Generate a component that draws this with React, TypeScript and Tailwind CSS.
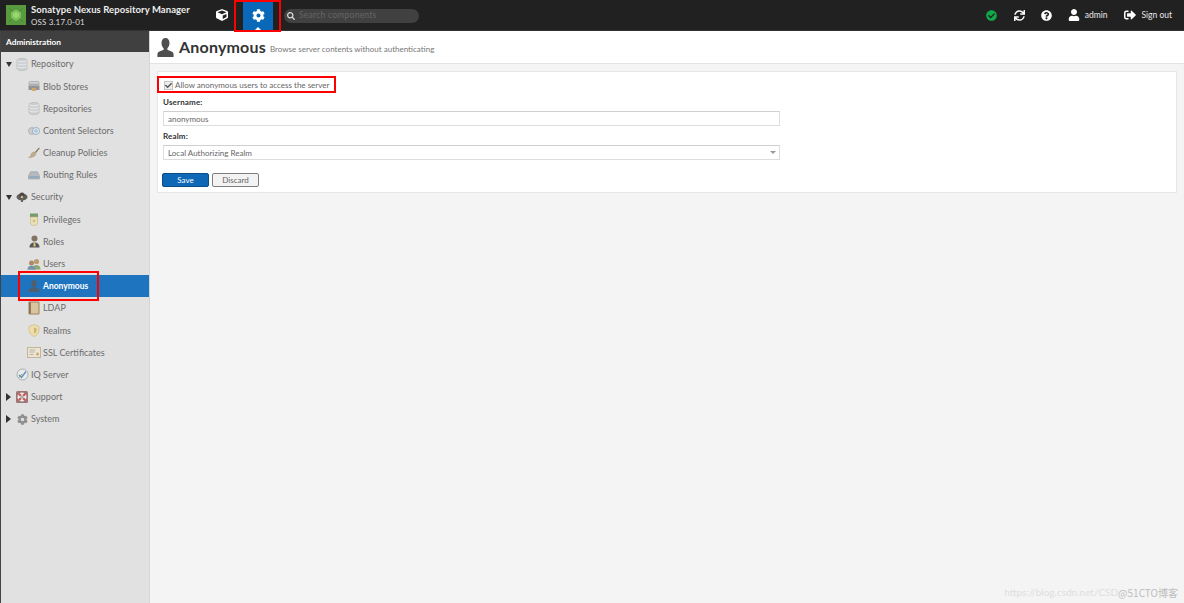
import React from "react";
import { FaCube, FaCog, FaSearch, FaCheckCircle, FaSync, FaQuestionCircle, FaUser, FaSignOutAlt, FaCheck } from "react-icons/fa";

const Db = ({ c = "#c9cdd0" }: { c?: string }) => (
  <svg width="12" height="13" viewBox="0 0 12 13">
    <path d="M1 2.500C1 1.200 3.200.6 6 .6s5 .6 5 1.900v8c0 1.300-2.200 2-5 2s-5-.7-5-2z" fill={c} stroke="#a9adb0" strokeWidth=".7" />
    <path d="M1 5.500c1 1 2.800 1.300 5 1.300s4-.3 5-1.300M1 8.500c1 1 2.800 1.300 5 1.300s4-.3 5-1.300M1 2.500c1 1 2.800 1.300 5 1.300s4-.3 5-1.300" fill="none" stroke="#f1f1f1" strokeWidth=".8" />
  </svg>
);
const Blob = () => (
  <svg width="12" height="12" viewBox="0 0 12 12">
    <rect x=".5" y="1" width="11" height="6" rx="2" fill="#a3a6a8" />
    <rect x=".5" y="6" width="11" height="4" fill="#7f8285" />
    <rect x="4" y="8" width="4" height="3" fill="#c79a4a" />
    <rect x="1.500" y="2" width="9" height="1.500" fill="#d2d4d5" />
  </svg>
);
const Selector = () => (
  <svg width="12" height="10" viewBox="0 0 12 10">
    <ellipse cx="4" cy="5" rx="3.500" ry="3.500" fill="#c5c8ca" stroke="#9a9ea1" strokeWidth=".7" />
    <circle cx="8" cy="5" r="3.500" fill="#e6eef5" stroke="#6f93b5" strokeWidth=".8" />
    <circle cx="8" cy="5" r="1.300" fill="none" stroke="#5d86ad" strokeWidth=".7" />
  </svg>
);
const Brush = () => (
  <svg width="12" height="12" viewBox="0 0 12 12">
    <path d="M7 5l4-4.500.8.7L8 6z" fill="#6b5a36" />
    <path d="M.5 10.500C2 10 3 8 3.500 6.500 5 4.500 7 4.500 8 6c.3 2-1.500 3.500-3.500 4-1 .5-3 .8-4 .5z" fill="#b79f78" stroke="#8d7b5b" strokeWidth=".4" />
  </svg>
);
const Route = () => (
  <svg width="12" height="9" viewBox="0 0 12 9">
    <path d="M2.500.8h7L11.500 5v3h-11V5z" fill="#aab1b6" stroke="#858c91" strokeWidth=".6" />
    <rect x="1.200" y="5" width="9.600" height="2.200" fill="#7d9db8" />
  </svg>
);
const Security = () => (
  <svg width="12" height="12" viewBox="0 0 12 12">
    <ellipse cx="6" cy="6" rx="5.500" ry="3.500" fill="#3d3d3d" />
    <circle cx="6" cy="4" r="2.500" fill="#222" />
    <circle cx="6" cy="6" r="1.300" fill="#d4b24c" />
    <rect x="5" y="8" width="2" height="3" fill="#444" />
  </svg>
);
const Privileges = () => (
  <svg width="10" height="13" viewBox="0 0 10 13">
    <rect x="1" y=".5" width="8" height="3.500" fill="#5f8a4e" />
    <path d="M1.500 4h7v6a3.500 2.500 0 0 1-7 0z" fill="#ece2ae" stroke="#b5a96e" strokeWidth=".6" />
    <circle cx="5" cy="8" r="1.400" fill="#c9b866" />
  </svg>
);
const Roles = () => (
  <svg width="11" height="13" viewBox="0 0 11 13">
    <circle cx="5.500" cy="3.500" r="3" fill="#6b5a43" />
    <path d="M.5 12.500c0-3.500 2-5 5-5s5 1.500 5 5z" fill="#33373b" />
    <path d="M4.700 7.500h1.600l.3 4h-2.200z" fill="#d9c04f" />
  </svg>
);
const Users = () => (
  <svg width="14" height="12" viewBox="0 0 14 12">
    <circle cx="9.500" cy="3.500" r="2.600" fill="#b58a55" />
    <path d="M5.500 11.500c0-3 1.500-4.500 4-4.500s4 1.500 4 4.500z" fill="#7c9a5a" />
    <circle cx="4.500" cy="5" r="2.500" fill="#a27447" />
    <path d="M.5 11.800c0-3 1.500-4 4-4s4 1 4 4z" fill="#5d7ea0" />
  </svg>
);
const Person = ({ c = "#4d4d4d", s = 12, h }: { c?: string; s?: number; h?: number }) => (
  <svg width={s} height={h ?? s} viewBox="0 0 20 20" preserveAspectRatio="none">
    <path d="M10 0c3 0 4.700 2.200 4.700 5.300 0 2.500-1 4.400-2.500 5.500v1.500c1.500 1 7.300 1.500 7.300 4.700V20H.5v-3c0-3.200 5.800-3.700 7.300-4.700v-1.500C6.300 9.700 5.300 7.800 5.300 5.300 5.300 2.200 7 0 10 0z" fill={c} />
  </svg>
);
const Ldap = () => (
  <svg width="12" height="14" viewBox="0 0 12 14">
    <rect x=".5" y=".5" width="11" height="13" rx="1" fill="#8e6b3f" />
    <rect x="3" y="1.500" width="7.500" height="11" fill="#d8bf8d" />
    <path d="M1.700 2v10" stroke="#5e4526" strokeWidth=".8" />
  </svg>
);
const Shield = () => (
  <svg width="12" height="13" viewBox="0 0 12 13">
    <path d="M6 .5l5 2v3.500c0 3-2.200 5.500-5 6.500-2.800-1-5-3.500-5-6.500V2.500z" fill="#f0dda0" stroke="#c9b26a" strokeWidth=".7" />
    <path d="M6 3.500l2.500 1v2c0 1.500-1 2.500-2.500 3z" fill="#c9ab52" />
  </svg>
);
const Cert = () => (
  <svg width="14" height="11" viewBox="0 0 14 11">
    <rect x=".5" y=".5" width="13" height="10" fill="#f0e7cf" stroke="#b9ac8d" />
    <path d="M2.500 3h6M2.500 5h5M2.500 7.500h4" stroke="#8e8e84" strokeWidth=".7" />
    <circle cx="10.500" cy="7" r="1.500" fill="#c89b62" />
  </svg>
);
const IqIcon = () => (
  <svg width="13" height="13" viewBox="0 0 13 13">
    <circle cx="6.500" cy="6.500" r="5.500" fill="#eceded" stroke="#9da1a3" />
    <path d="M3 7l2.500 2.500L10 3.500" fill="none" stroke="#3c7bb5" strokeWidth="1.300" />
    <path d="M3 9.500L6 6" stroke="#5b9a4c" strokeWidth="1" />
  </svg>
);
const Support = () => (
  <svg width="12" height="12" viewBox="0 0 12 12">
    <rect width="12" height="12" rx="1.500" fill="#8d5b5b" />
    <circle cx="6" cy="6" r="4.500" fill="#f3eeee" />
    <path d="M2.800 2.800l2 2M9.200 2.800l-2 2M2.800 9.200l2-2M9.200 9.200l-2-2" stroke="#c4322f" strokeWidth="2.200" />
    <circle cx="6" cy="6" r="1.700" fill="#9c9c9c" />
  </svg>
);
const Gear = () => <FaCog className="text-[#7b7b7b]" size={11} />;

type Row = { label: string; icon: React.ReactNode; depth: 0 | 1; caret?: "down" | "right"; active?: boolean };
const rows: Row[] = [
  { label: "Repository", icon: <Db />, depth: 0, caret: "down" },
  { label: "Blob Stores", icon: <Blob />, depth: 1 },
  { label: "Repositories", icon: <Db />, depth: 1 },
  { label: "Content Selectors", icon: <Selector />, depth: 1 },
  { label: "Cleanup Policies", icon: <Brush />, depth: 1 },
  { label: "Routing Rules", icon: <Route />, depth: 1 },
  { label: "Security", icon: <Security />, depth: 0, caret: "down" },
  { label: "Privileges", icon: <Privileges />, depth: 1 },
  { label: "Roles", icon: <Roles />, depth: 1 },
  { label: "Users", icon: <Users />, depth: 1 },
  { label: "Anonymous", icon: <Person c="#5b5b5b" />, depth: 1, active: true },
  { label: "LDAP", icon: <Ldap />, depth: 1 },
  { label: "Realms", icon: <Shield />, depth: 1 },
  { label: "SSL Certificates", icon: <Cert />, depth: 1 },
  { label: "IQ Server", icon: <IqIcon />, depth: 0 },
  { label: "Support", icon: <Support />, depth: 0, caret: "right" },
  { label: "System", icon: <Gear />, depth: 0, caret: "right" },
];

function TreeRow({ r }: { r: Row }) {
  return (
    <div className={`relative h-[22.2px] flex items-center ${r.active ? "bg-[#1f74c0] text-white font-bold text-[8.5px]" : "text-[#6c6c6c]"}`}>
      {r.caret === "down" && <span className="absolute left-[5px] top-[9px] w-0 h-0 border-x-[3px] border-x-transparent border-t-[5px] border-t-[#333]" />}
      {r.caret === "right" && <span className="absolute left-[5px] top-[7px] w-0 h-0 border-y-[4px] border-y-transparent border-l-[5px] border-l-[#333]" />}
      <span className={`flex justify-center items-center w-[14px] shrink-0 opacity-80 ${r.depth === 1 ? "ml-[26px] mr-[2px]" : "ml-[14px] mr-[2px]"}`}>{r.icon}</span>
      <span>{r.label}</span>
    </div>
  );
}

export default function App() {
  return (
    <div className="h-[603px] w-[1184px] overflow-hidden flex flex-col relative bg-[#f4f4f4] text-[9px] font-['Lato','Open_Sans',sans-serif]">
      <header className="h-[31px] bg-[#212121] flex items-center text-white shrink-0 border-b border-[#333]">
        <div className="ml-[6px] w-[20px] h-[20px] bg-[#5a9a3e] flex items-center justify-center shrink-0">
          <svg width="16" height="16" viewBox="0 0 16 16">
            <path d="M1 1l14 14M15 1L1 15" stroke="#3f7a2e" strokeWidth=".7" />
            <path d="M8 2.500l5 3v5.500l-5 3-5-3V5.500z" fill="#7cc25a" />
            <path d="M8 5l2.800 1.600v3L8 11.300 5.200 9.600v-3z" fill="#9ad672" />
          </svg>
        </div>
        <div className="ml-[5px] w-[183px] shrink-0">
          <div className="mt-[1px] font-bold text-[9.5px] leading-[12px] tracking-[0.008em] text-[#eee] whitespace-nowrap">Sonatype Nexus Repository Manager</div>
          <div className="text-[8px] leading-[12px] text-[#ddd] tracking-[0.02em]">OSS 3.17.0-01</div>
        </div>
        <div className="ml-[-2px] w-[20px] flex justify-center shrink-0"><FaCube size={12} /></div>
        <div className="ml-[11px] w-[30px] h-[30px] bg-[#0a68b8] shrink-0 relative flex justify-center items-center">
          <FaCog size={13} />
          <span className="absolute bottom-0 left-[12px] w-0 h-0 border-x-[3px] border-x-transparent border-b-[3px] border-b-white" />
        </div>
        <div className="ml-[11px] mt-[1px] w-[135px] h-[14px] rounded-full bg-[#414141] shrink-0 flex items-center pl-[3px] gap-[4px]">
          <FaSearch size={8} className="text-[#ddd]" />
          <span className="text-[#666] text-[8.5px] tracking-[0.03em]">Search components</span>
        </div>
        <div className="ml-auto flex items-center text-[#e8e8e8] text-[8.5px] pr-[12px]">
          <FaCheckCircle size={11} className="text-[#11a84a]" />
          <FaSync size={11} className="ml-[17px] text-white" />
          <FaQuestionCircle size={11} className="ml-[16px] text-white" />
          <FaUser size={12} className="ml-[16px] text-white" />
          <span className="ml-[5px]">admin</span>
          <FaSignOutAlt size={12} className="ml-[17px] text-white" />
          <span className="ml-[5px]">Sign out</span>
        </div>
      </header>

      <div className="flex-1 flex min-h-0">
        <aside className="w-[150px] shrink-0 bg-[#e1e1e1] border-l border-[#444] border-r-[#d5d5d5] border-r">
          <div className="h-[21px] mb-[1px] bg-[#404040] text-white font-bold text-[8.3px] flex items-center pl-[5px] pt-[1px]">Administration</div>
          {rows.map((r) => <TreeRow key={r.label} r={r} />)}
        </aside>

        <main className="flex-1 min-w-0 flex flex-col">
          <div className="h-[33px] bg-white border-b border-[#e3e3e3] flex items-center pl-[7px] shrink-0">
            <Person c="#4f4f4f" s={17} h={19} />
            <span className="ml-[5px] font-bold text-[16px] text-[#333] leading-none tracking-[0.012em]">Anonymous</span>
            <span className="ml-[4px] mt-[3px] text-[#777] text-[8px]">Browse server contents without authenticating</span>
          </div>
          <section className="mt-[7px] ml-[7px] mr-[7px] h-[122px] bg-white border border-[#e6e6e6] pl-[5px] pt-[5px] shrink-0 text-[8px]">
            <div className="h-[16px] flex items-center gap-[2px] text-[#666] pl-[1px]">
              <span className="w-[9px] h-[9px] border border-[#c4c4c4] bg-[#eee] flex items-center justify-center"><FaCheck size={7} className="text-[#555]" /></span>
              <span>Allow anonymous users to access the server</span>
            </div>
            <div className="mt-[3px] h-[13px] font-bold text-[#333] leading-[13px] tracking-[0.02em]">Username:</div>
            <div className="mt-[2px] w-[617px] h-[15px] border border-[#ddd] border-t-[#d0d0d0] flex items-center pl-[4px] text-[#666]">anonymous</div>
            <div className="mt-[4px] h-[13px] font-bold text-[#333] leading-[13px] tracking-[0.02em]">Realm:</div>
            <div className="mt-[2px] w-[617px] h-[15px] border border-[#ddd] border-t-[#d0d0d0] flex items-center pl-[4px] pr-[3px] text-[#666] justify-between">
              <span>Local Authorizing Realm</span>
              <span className="w-0 h-0 border-x-[3px] border-x-transparent border-t-[3px] border-t-[#999]" />
            </div>
            <div className="mt-[13px] flex gap-[3px] -ml-[1px]">
              <button className="w-[47px] h-[14px] rounded-[2px] bg-[#0f68b5] border border-[#0a4f8c] text-white text-[8px] leading-none">Save</button>
              <button className="w-[47px] h-[14px] rounded-[2px] bg-[#f3f3f3] border border-[#7f7f7f] text-[#666] text-[8px] leading-none">Discard</button>
            </div>
          </section>
        </main>
      </div>

      {/* red annotation boxes drawn over the screenshot */}
      <div className="absolute left-[234px] top-0 w-[47px] h-[32px] border-[2px] border-[#f00]" />
      <div className="absolute left-[18px] top-[271px] w-[81px] h-[30px] border-[2px] border-[#f00]" />
      <div className="absolute left-[157px] top-[76px] w-[179px] h-[17px] border-[2px] border-[#f00]" />

      <div className="absolute right-[6px] bottom-[3px] text-[10px] whitespace-nowrap flex items-center">
        <span className="text-[#dedede]">https://blog.csdn.net/CSD</span>
        <span className="text-[#bdbdbd] font-['Noto_Sans_CJK_SC',sans-serif]">@51CTO博客</span>
      </div>
    </div>
  );
}
